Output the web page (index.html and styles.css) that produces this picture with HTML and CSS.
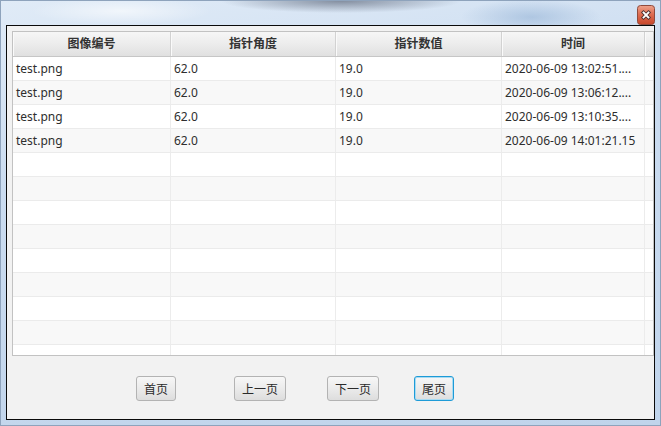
FILE: index.html
```html
<!DOCTYPE html>
<html>
<head>
<meta charset="utf-8">
<link rel="stylesheet" href="styles.css">
</head>
<body>
<div class="frame">
  <div class="titlebar">
    <div class="close">
      <svg width="18" height="20" viewBox="0 0 18 20">
        <defs>
          <linearGradient id="cg" x1="0" y1="0" x2="0" y2="1">
            <stop offset="0" stop-color="#eea38c"/>
            <stop offset="0.45" stop-color="#de6e52"/>
            <stop offset="1" stop-color="#c9472a"/>
          </linearGradient>
        </defs>
        <rect x="0.5" y="0.5" width="17" height="19" rx="3" fill="url(#cg)" stroke="#8f4b3d"/>
        <path d="M6.5 7.5 L11.5 12.5 M11.5 7.5 L6.5 12.5" stroke="#4a3030" stroke-width="3.6" stroke-linecap="square"/>
        <path d="M6.5 7.5 L11.5 12.5 M11.5 7.5 L6.5 12.5" stroke="#ffffff" stroke-width="1.8" stroke-linecap="square"/>
      </svg>
    </div>
  </div>
  <div class="client">
    <div class="table">
      <div class="thead">
        <div class="th">图像编号</div>
        <div class="th">指针角度</div>
        <div class="th">指针数值</div>
        <div class="th">时间</div>
        <div class="th filler"></div>
      </div>
      <div class="tbody">
        <div class="tr"><div class="td">test.png</div><div class="td">62.0</div><div class="td">19.0</div><div class="td">2020-06-09 13:02:51....</div><div class="td filler"></div></div>
        <div class="tr odd"><div class="td">test.png</div><div class="td">62.0</div><div class="td">19.0</div><div class="td">2020-06-09 13:06:12....</div><div class="td filler"></div></div>
        <div class="tr"><div class="td">test.png</div><div class="td">62.0</div><div class="td">19.0</div><div class="td">2020-06-09 13:10:35....</div><div class="td filler"></div></div>
        <div class="tr odd"><div class="td">test.png</div><div class="td">62.0</div><div class="td">19.0</div><div class="td">2020-06-09 14:01:21.15</div><div class="td filler"></div></div>
        <div class="tr"><div class="td"></div><div class="td"></div><div class="td"></div><div class="td"></div><div class="td filler"></div></div>
        <div class="tr odd"><div class="td"></div><div class="td"></div><div class="td"></div><div class="td"></div><div class="td filler"></div></div>
        <div class="tr"><div class="td"></div><div class="td"></div><div class="td"></div><div class="td"></div><div class="td filler"></div></div>
        <div class="tr odd"><div class="td"></div><div class="td"></div><div class="td"></div><div class="td"></div><div class="td filler"></div></div>
        <div class="tr"><div class="td"></div><div class="td"></div><div class="td"></div><div class="td"></div><div class="td filler"></div></div>
        <div class="tr odd"><div class="td"></div><div class="td"></div><div class="td"></div><div class="td"></div><div class="td filler"></div></div>
        <div class="tr"><div class="td"></div><div class="td"></div><div class="td"></div><div class="td"></div><div class="td filler"></div></div>
        <div class="tr odd"><div class="td"></div><div class="td"></div><div class="td"></div><div class="td"></div><div class="td filler"></div></div>
        <div class="tr"><div class="td"></div><div class="td"></div><div class="td"></div><div class="td"></div><div class="td filler"></div></div>
      </div>
    </div>
    <div class="pager">
      <button class="btn btn-first">首页</button>
      <button class="btn btn-prev">上一页</button>
      <button class="btn btn-next">下一页</button>
      <button class="btn btn-last focused">尾页</button>
    </div>
  </div>
</div>
</body>
</html>
```
FILE: styles.css
```css
* { box-sizing: border-box; }
html, body {
  margin: 0;
  padding: 0;
  width: 661px;
  height: 426px;
  overflow: hidden;
}
body {
  font-family: "Noto Sans", "Noto Sans CJK SC", sans-serif;
  font-size: 12px;
  color: #333;
}
.frame {
  width: 661px;
  height: 426px;
  display: flex;
  flex-direction: column;
  border: 1px solid #8ea3bc;
  padding: 0 5px 5px 5px;
  background:
    radial-gradient(ellipse 120px 12px at 340px 0px, rgba(110,120,138,0.8), rgba(110,120,138,0) 100%),
    radial-gradient(ellipse 70px 18px at 530px 16px, rgba(130,165,205,0.45), rgba(130,165,205,0) 100%),
    radial-gradient(ellipse 90px 14px at 120px 10px, rgba(255,255,255,0.6), rgba(255,255,255,0) 100%),
    linear-gradient(170deg, #e0ebf7 0%, #cbdcf0 35%, #c0d4eb 100%);
}
.titlebar {
  height: 24px;
  display: flex;
  justify-content: flex-end;
  align-items: flex-end;
  flex: none;
}
.close {
  width: 18px;
  height: 20px;
  display: flex;
}
.client {
  flex: 1;
  border: 1px solid #0a0a0a;
  background: #f2f2f2;
  padding: 5px 0 0 5px;
  display: flex;
  flex-direction: column;
}
.table {
  width: 642px;
  height: 325px;
  border: 1px solid #c2c2c2;
  background: #ffffff;
  display: flex;
  flex-direction: column;
  flex: none;
}
.thead, .tr {
  display: grid;
  grid-template-columns: 158px 165px 166px 143px 8px;
}
.thead {
  height: 25px;
  border-bottom: 1px solid #c6c6c6;
  background: linear-gradient(to bottom, #f6f6f6 0%, #ececec 50%, #e0e0e0 100%);
  flex: none;
}
.th {
  border-right: 1px solid #d2d2d2;
  box-shadow: inset 1px 0 0 #fafafa;
  text-align: center;
  font-weight: bold;
  line-height: 24px;
  color: #333;
}
.th.filler { border-right: none; }
.tbody {
  height: 298px;
  overflow: hidden;
}
.tr {
  height: 24px;
  border-bottom: 1px solid #ebebeb;
  background: #ffffff;
}
.tr.odd { background: #f8f8f8; }
.td {
  border-right: 1px solid #ececec;
  padding-left: 3px;
  line-height: 23px;
  white-space: nowrap;
  overflow: hidden;
  color: #2e2e2e;
}
.td.filler { border-right: none; }
.pager {
  display: flex;
  align-items: flex-start;
  padding: 20px 0 0 124px;
}
.btn {
  height: 25px;
  margin: 0;
  padding: 0;
  border: 1px solid #b3b3b3;
  border-radius: 3px;
  background: linear-gradient(to bottom, #f7f7f7 0%, #ebebeb 50%, #dddddd 100%);
  font-family: "Noto Sans CJK SC", "Noto Sans", sans-serif;
  font-size: 12px;
  color: #2a2a2a;
  line-height: 23px;
  text-align: center;
}
.btn-first { width: 40px; }
.btn-prev { width: 52px; margin-left: 58px; }
.btn-next { width: 52px; margin-left: 41px; }
.btn-last { width: 40px; margin-left: 35px; }
.focused {
  border-color: #1e9bd7;
  box-shadow: inset 0 0 0 1px #a9dbf2;
}
```
